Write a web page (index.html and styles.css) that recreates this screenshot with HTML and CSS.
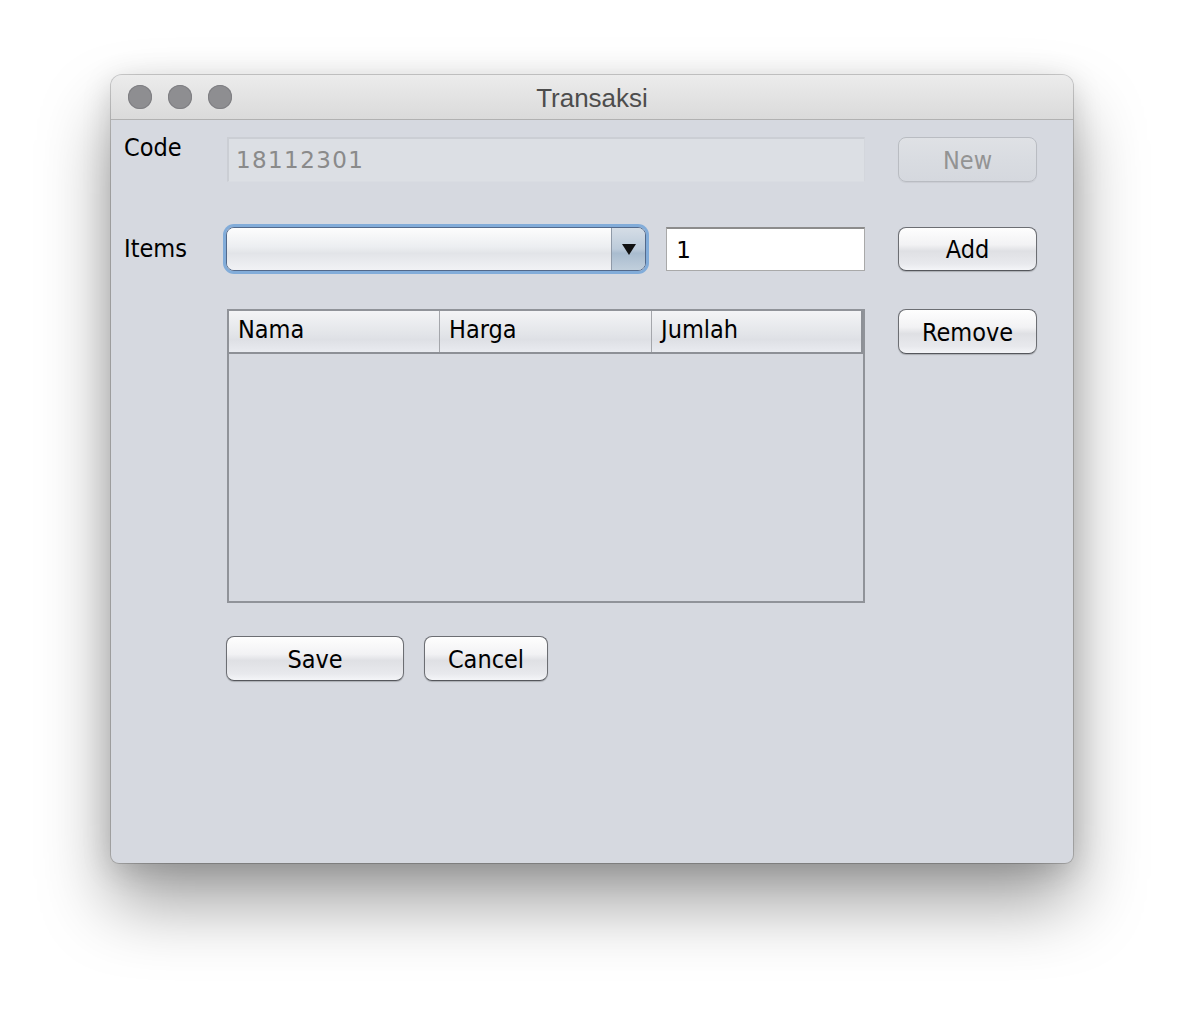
FILE: index.html
```html
<!DOCTYPE html>
<html>
<head>
<meta charset="utf-8">
<link rel="stylesheet" href="styles.css">
</head>
<body>
<div class="window">
  <div class="titlebar">
    <div class="lights"><span class="light"></span><span class="light"></span><span class="light"></span></div>
    <div class="title">Transaksi</div>
  </div>
  <div class="content">
    <div class="label label-code">Code</div>
    <div class="field field-disabled">18112301</div>
    <div class="btn btn-disabled btn-new">New</div>

    <div class="label label-items">Items</div>
    <div class="items">
      <div class="combo">
        <div class="combo-main"></div>
        <div class="combo-arrow"><span class="tri"></span></div>
      </div>
      <div class="field field-text">1</div>
    </div>
    <div class="btn btn-add">Add</div>

    <div class="table">
      <div class="thead">
        <div class="th th1">Nama</div>
        <div class="th th2">Harga</div>
        <div class="th th3">Jumlah</div>
        <div class="th-corner"></div>
      </div>
      <div class="tbody"></div>
    </div>
    <div class="btn btn-remove">Remove</div>

    <div class="actions">
      <div class="btn btn-save">Save</div>
      <div class="btn btn-cancel">Cancel</div>
    </div>
  </div>
</div>
</body>
</html>
```

FILE: styles.css
```css
html, body {
  margin: 0;
  padding: 0;
  background: #ffffff;
  width: 1184px;
  height: 1010px;
  overflow: hidden;
}
body {
  font-family: "DejaVu Sans Condensed", "DejaVu Sans", sans-serif;
  font-stretch: condensed;
  color: #000;
}
.window {
  margin: 75px 0 0 111px;
  width: 962px;
  height: 788px;
  box-sizing: border-box;
  border-radius: 11px 11px 8px 8px;
  background: #d6d9e0;
  box-shadow: 0 0 0 1px rgba(0,0,0,0.18), 0 40px 70px rgba(0,0,0,0.38), 0 6px 30px rgba(0,0,0,0.15);
  overflow: hidden;
}
.titlebar {
  height: 44px;
  border-bottom: 1px solid #b1b1b1;
  background: linear-gradient(#ececec, #dadada);
  display: flex;
  align-items: center;
  position: relative;
}
.lights {
  display: flex;
  gap: 16px;
  padding-left: 17px;
}
.light {
  width: 24px;
  height: 24px;
  border-radius: 50%;
  background: #8e8e91;
  box-shadow: inset 0 0 0 1px #7f7f83;
}
.title {
  position: absolute;
  left: 0;
  right: 0;
  top: 0;
  line-height: 46px;
  text-align: center;
  font-family: "Liberation Sans", sans-serif;
  font-stretch: normal;
  font-size: 26px;
  color: #4d4d4d;
}
.content {
  display: grid;
  grid-template-columns: 70px 638px 139px;
  grid-template-rows: 45px 45px 44px 38px 294px 33px 45px;
  column-gap: 33px;
  padding: 17px 0 0 13px;
}
.label {
  font-size: 25px;
  line-height: 30px;
  grid-column: 1;
}
.label-code { grid-row: 1; margin-top: -4px; }
.label-items { grid-row: 3; align-self: center; }
.field {
  box-sizing: border-box;
  height: 45px;
  font-size: 25px;
  display: flex;
  align-items: center;
}
.field-disabled {
  grid-row: 1;
  grid-column: 2;
  background: #dcdfe4;
  border-top: 2px solid #cbced4;
  border-left: 2px solid #cbced4;
  border-right: 1px solid #d3d6dc;
  border-bottom: 1px solid #d9dce2;
  color: #8a8a8a;
  padding-left: 7px;
  letter-spacing: 1.4px;
  font-family: "DejaVu Sans", sans-serif;
  font-stretch: normal;
  font-size: 23px;
}
.items {
  grid-row: 3;
  grid-column: 2;
  display: flex;
  gap: 20px;
  height: 44px;
}
.combo {
  margin-left: -1px;
  width: 421px;
  height: 44px;
  box-sizing: border-box;
  border-radius: 8px;
  border: 1px solid #53698a;
  box-shadow: 0 0 0 3px #82acd9;
  display: flex;
  overflow: hidden;
}
.combo-main {
  flex: 1;
  background: linear-gradient(#fdfdfd, #eceef1 45%, #e2e4e8 60%, #f1f2f5);
}
.combo-arrow {
  width: 33px;
  border-left: 1px solid #8f9aa8;
  background: linear-gradient(#d5dde6, #bccbda 50%, #a9bccf 60%, #c1cfdc);
  display: flex;
  align-items: center;
  justify-content: center;
}
.tri {
  width: 0;
  height: 0;
  border-left: 7px solid transparent;
  border-right: 7px solid transparent;
  border-top: 11px solid #111;
}
.field-text {
  width: 199px;
  height: 44px;
  background: #ffffff;
  border: 1px solid #a9a9a9;
  border-top: 2px solid #8c8c8c;
  padding-left: 9px;
  font-family: "DejaVu Sans", sans-serif;
  font-stretch: normal;
  font-size: 23px;
}
.btn {
  grid-column: 3;
  box-sizing: border-box;
  height: 45px;
  border-radius: 8px;
  border: 1px solid #6c6e73;
  border-bottom-color: #55575c;
  background: linear-gradient(#fefefe, #f2f2f4 40%, #dfe0e4 55%, #e8e9ed 85%, #f4f5f8);
  box-shadow: 0 1px 1px rgba(0,0,0,0.2);
  display: flex;
  align-items: center;
  justify-content: center;
  font-size: 25px;
  padding-top: 1px;
}
.btn-new { grid-row: 1; }
.btn-disabled {
  border: 1px solid #b9bcc2;
  background: linear-gradient(#dfe1e5, #d9dce1 50%, #d5d8de);
  color: #939393;
  box-shadow: 0 1px 1px rgba(0,0,0,0.06);
}
.btn-add { grid-row: 3; height: 44px; }
.btn-remove { grid-row: 5; align-self: start; }
.table {
  grid-row: 5;
  grid-column: 2;
  box-sizing: border-box;
  border: 2px solid #909399;
  display: flex;
  flex-direction: column;
}
.thead {
  display: flex;
  height: 41px;
  border-bottom: 2px solid #8d9096;
  background: linear-gradient(#f3f4f6, #e3e5e9 55%, #dee0e5 70%, #e9ebf0);
}
.th {
  box-sizing: border-box;
  padding-left: 9px;
  font-size: 25px;
  line-height: 38px;
  border-right: 1px solid #a4a6ab;
}
.th1 { width: 211px; }
.th2 { width: 212px; }
.th3 { width: 211px; border-right: 2px solid #8d9096; }
.th-corner { flex: 1; }
.tbody { flex: 1; }
.actions {
  grid-row: 7;
  grid-column: 2;
  display: flex;
  gap: 20px;
  margin-left: -1px;
}
.actions .btn { grid-column: auto; }
.btn-save { width: 178px; }
.btn-cancel { width: 124px; }
```
